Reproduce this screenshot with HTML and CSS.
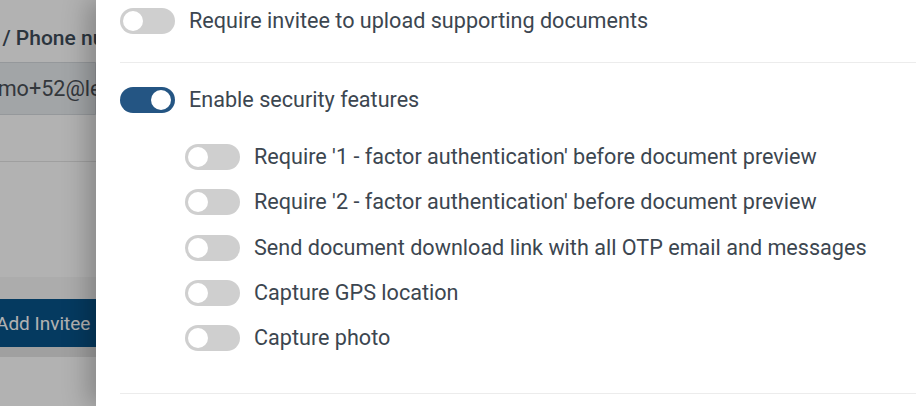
FILE: index.html
```html
<!DOCTYPE html>
<html>
<head>
<meta charset="utf-8">
<link rel="stylesheet" href="styles.css">
</head>
<body>
<div class="page">
  <div class="behind">
    <div class="form">
      <div class="label">Email / Phone number</div>
      <div class="input">demo+52@legal.com</div>
      <div class="spacer"></div>
      <div class="footer">
        <button class="btn">Add Invitee</button>
      </div>
      <div class="under"></div>
    </div>
  </div>
  <div class="overlay"></div>
  <aside class="drawer">
    <section class="sec sec-first">
      <label class="row">
        <span class="toggle"><span class="knob"></span></span>
        <span class="txt">Require invitee to upload supporting documents</span>
      </label>
    </section>
    <section class="sec sec-security">
      <label class="row">
        <span class="toggle on"><span class="knob"></span></span>
        <span class="txt">Enable security features</span>
      </label>
      <div class="sub">
        <label class="row">
          <span class="toggle"><span class="knob"></span></span>
          <span class="txt">Require '1 - factor authentication' before document preview</span>
        </label>
        <label class="row">
          <span class="toggle"><span class="knob"></span></span>
          <span class="txt">Require '2 - factor authentication' before document preview</span>
        </label>
        <label class="row">
          <span class="toggle"><span class="knob"></span></span>
          <span class="txt">Send document download link with all OTP email and messages</span>
        </label>
        <label class="row">
          <span class="toggle"><span class="knob"></span></span>
          <span class="txt">Capture GPS location</span>
        </label>
        <label class="row">
          <span class="toggle"><span class="knob"></span></span>
          <span class="txt">Capture photo</span>
        </label>
      </div>
    </section>
  </aside>
</div>
</body>
</html>
```
FILE: styles.css
```css
html, body {
  margin: 0;
  padding: 0;
  width: 916px;
  height: 406px;
  overflow: hidden;
  font-family: Roboto, "Liberation Sans", sans-serif;
}

.page {
  position: relative;
  width: 916px;
  height: 406px;
  background: #ffffff;
}

.behind {
  width: 96px;
  height: 406px;
  overflow: hidden;
  display: flex;
  justify-content: flex-end;
}

.form {
  flex: none;
  width: 300px;
  display: flex;
  flex-direction: column;
}

.label {
  padding: 26px 0 0 149px;
  font-size: 21px;
  font-weight: 500;
  color: #3e4c5a;
  line-height: 24px;
  white-space: nowrap;
}

.input {
  margin: 12px 0 0 163px;
  height: 53px;
  box-sizing: border-box;
  border: 1px solid #d6dadf;
  border-radius: 4px 0 0 4px;
  background: #e9ecef;
  padding: 0 0 0 14px;
  font-size: 21.6px;
  line-height: 51px;
  color: #495057;
  white-space: nowrap;
}

.spacer {
  height: 46px;
  border-bottom: 1px solid #e4e4e4;
}

.footer {
  margin-top: 115px;
  background: #f7f7f7;
  padding-top: 22px;
  padding-left: 190px;
}

.btn {
  display: block;
  height: 48px;
  width: 140px;
  border: 0;
  background: #08538a;
  color: #ffffff;
  font-family: Roboto, "Liberation Sans", sans-serif;
  font-size: 19px;
  padding: 0 0 0 10px;
  text-align: left;
}

.under {
  height: 10px;
  background: #e6e6e6;
}

.overlay {
  position: absolute;
  inset: 0;
  background: rgba(0, 0, 0, 0.3);
}

.drawer {
  position: absolute;
  top: 0;
  left: 96px;
  right: 0;
  bottom: 0;
  background: #ffffff;
  box-shadow: -8px 0 24px rgba(0, 0, 0, 0.25);
  padding-left: 24px;
  color: #3c4650;
}

.sec {
  border-bottom: 1px solid #ececec;
}

.sec-first {
  padding: 8px 0 28px;
}

.sec-security {
  padding: 24px 0 42px;
}

.row {
  display: flex;
  align-items: center;
  gap: 14px;
  height: 26px;
}

.sub {
  padding-left: 65px;
  margin-top: 31px;
  display: flex;
  flex-direction: column;
  gap: 19.3px;
}

.toggle {
  position: relative;
  flex: none;
  width: 55px;
  height: 26px;
  border-radius: 13px;
  background: #cfcfcf;
}

.toggle .knob {
  position: absolute;
  top: 3px;
  left: 3px;
  width: 20px;
  height: 20px;
  border-radius: 50%;
  background: #ffffff;
}

.toggle.on {
  background: #245583;
}

.toggle.on .knob {
  left: auto;
  right: 4px;
}

.txt {
  font-size: 21.6px;
  line-height: 26px;
  white-space: nowrap;
}
```
